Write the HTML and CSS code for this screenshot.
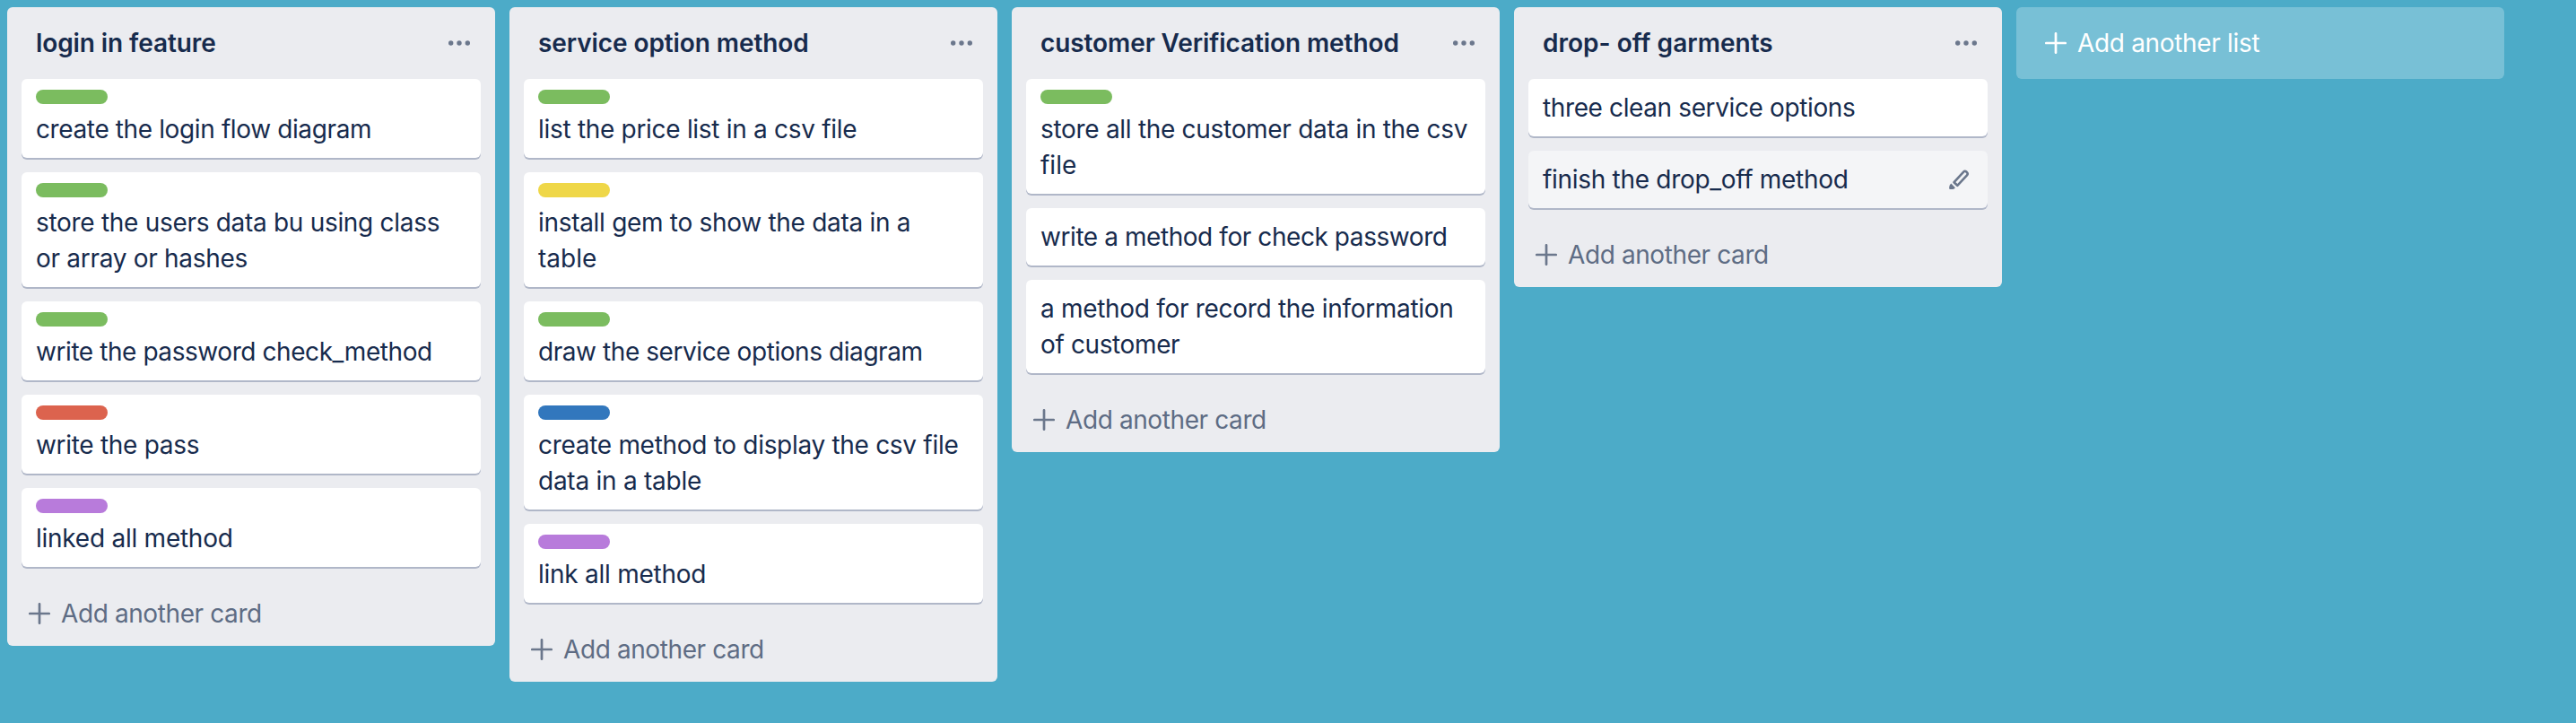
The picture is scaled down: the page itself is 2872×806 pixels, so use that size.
FILE: index.html
```html
<!DOCTYPE html>
<html lang="en">
<head>
<meta charset="utf-8">
<title>Board</title>
<link rel="stylesheet" href="styles.css">
</head>
<body>
<svg class="sprite" aria-hidden="true">
  <symbol id="plus" viewBox="0 0 24 24"><path d="M12 1.3V22.7M1.3 12H22.7" fill="none" stroke="currentColor" stroke-width="2.7" stroke-linecap="round"/></symbol>
  <symbol id="dots" viewBox="0 0 24 6"><g fill="currentColor"><circle cx="2.7" cy="3" r="2.7"/><circle cx="12" cy="3" r="2.7"/><circle cx="21.3" cy="3" r="2.7"/></g></symbol>
  <symbol id="pencil" viewBox="0 0 24 24"><path d="M6.6 15.2L17.2 3.6Q18.7 2 20.3 3.5L20.9 4.1Q22.5 5.7 21 7.3L10.3 18.8Z" fill="none" stroke="currentColor" stroke-width="2.6" stroke-linejoin="round"/><path d="M3.3 16.6L7.9 21.2L7 22.2Q6.2 23 5.2 23H2.3Q1 23 1.1 21.7L1.5 19.1Q1.7 18.2 3.3 16.6Z" fill="currentColor"/></symbol>
</svg>
<main class="board">
  <section class="list">
    <header class="list-header"><h2>login in feature</h2><svg class="dots"><use href="#dots"/></svg></header>
    <div class="cards">
      <article class="card"><div class="label green"></div><p class="tight">create the login flow diagram</p></article>
      <article class="card"><div class="label green"></div><p>store the users data bu using class<br>or array or hashes</p></article>
      <article class="card"><div class="label green"></div><p class="tighter">write the password check_method</p></article>
      <article class="card"><div class="label red"></div><p>write the pass</p></article>
      <article class="card"><div class="label purple"></div><p class="loose">linked all method</p></article>
    </div>
    <footer class="add-card"><svg class="plus"><use href="#plus"/></svg><span>Add another card</span></footer>
  </section>
  <section class="list">
    <header class="list-header"><h2>service option method</h2><svg class="dots"><use href="#dots"/></svg></header>
    <div class="cards">
      <article class="card"><div class="label green"></div><p>list the price list in a csv file</p></article>
      <article class="card"><div class="label yellow"></div><p>install gem to show the data in a<br><span class="natural">table</span></p></article>
      <article class="card"><div class="label green"></div><p class="tighter">draw the service options diagram</p></article>
      <article class="card"><div class="label blue"></div><p>create method to display the csv file<br><span class="loose">data in a table</span></p></article>
      <article class="card"><div class="label purple"></div><p class="loose">link all method</p></article>
    </div>
    <footer class="add-card"><svg class="plus"><use href="#plus"/></svg><span>Add another card</span></footer>
  </section>
  <section class="list">
    <header class="list-header"><h2>customer Verification method</h2><svg class="dots"><use href="#dots"/></svg></header>
    <div class="cards">
      <article class="card"><div class="label green"></div><p>store all the customer data in the csv<br><span class="natural">file</span></p></article>
      <article class="card"><p class="tighter">write a method for check password</p></article>
      <article class="card"><p>a method for record the information<br><span class="tight">of customer</span></p></article>
    </div>
    <footer class="add-card"><svg class="plus"><use href="#plus"/></svg><span>Add another card</span></footer>
  </section>
  <section class="list">
    <header class="list-header"><h2 class="wide">drop- off garments</h2><svg class="dots"><use href="#dots"/></svg></header>
    <div class="cards">
      <article class="card"><p class="tight">three clean service options</p></article>
      <article class="card hovered"><p>finish the drop_off method</p><svg class="pencil"><use href="#pencil"/></svg></article>
    </div>
    <footer class="add-card"><svg class="plus"><use href="#plus"/></svg><span>Add another card</span></footer>
  </section>
  <div class="add-list"><svg class="plus"><use href="#plus"/></svg><span>Add another list</span></div>
</main>
</body>
</html>
```
FILE: styles.css
```css
* { box-sizing: border-box; }
body {
  margin: 0;
  min-height: 806px;
  background: #4cabc8;
  color: #172b4d;
  font: 400 28px/40px Inter, "Liberation Sans", sans-serif;
}
.sprite { display: none; }
.board { display: flex; align-items: flex-start; gap: 16px; padding: 8px; }
.list { flex: none; width: 544px; border-radius: 6px; background: #ebecf0; }
.list-header { display: flex; align-items: center; justify-content: space-between; height: 80px; padding: 0 28px 0 32px; }
h2 { margin: 0; font-size: 28px; line-height: 40px; font-weight: 600; letter-spacing: -0.09px; white-space: nowrap; }
.wide { letter-spacing: 0.03px; }
.dots { width: 24px; height: 6px; color: #6b778c; }
.cards { display: flex; flex-direction: column; gap: 16px; padding: 0 16px; }
.card { position: relative; padding: 12px 16px; border-radius: 6px; background: #fff; box-shadow: 0 2px 0 #b0b7c8; }
.hovered { background: #f4f5f7; }
.card p { margin: 0; letter-spacing: -0.3px; white-space: nowrap; }
.card .tight { letter-spacing: -0.38px; }
.card .tighter { letter-spacing: -0.43px; }
.card .loose { letter-spacing: -0.25px; }
.card .natural { letter-spacing: 0; }
.label { width: 80px; height: 16px; margin-bottom: 8px; border-radius: 8px; }
.green { background: #7bbc5f; }
.red { background: #dc634e; }
.purple { background: #b87bdb; }
.yellow { background: #efd748; }
.blue { background: #3277bd; }
.pencil { position: absolute; top: 20px; right: 20px; width: 24px; height: 24px; color: #6b778c; }
.add-card { display: flex; align-items: center; gap: 12px; height: 88px; padding: 16px 24px 0; color: #5e6c84; letter-spacing: -0.4px; }
.plus { flex: none; width: 24px; height: 24px; color: #6b778c; }
.add-list { display: flex; align-items: center; gap: 12px; width: 544px; height: 80px; padding: 0 32px; border-radius: 6px; background: #78c0d6; color: #fff; letter-spacing: -0.33px; }
.add-list .plus { color: #fff; }
```
